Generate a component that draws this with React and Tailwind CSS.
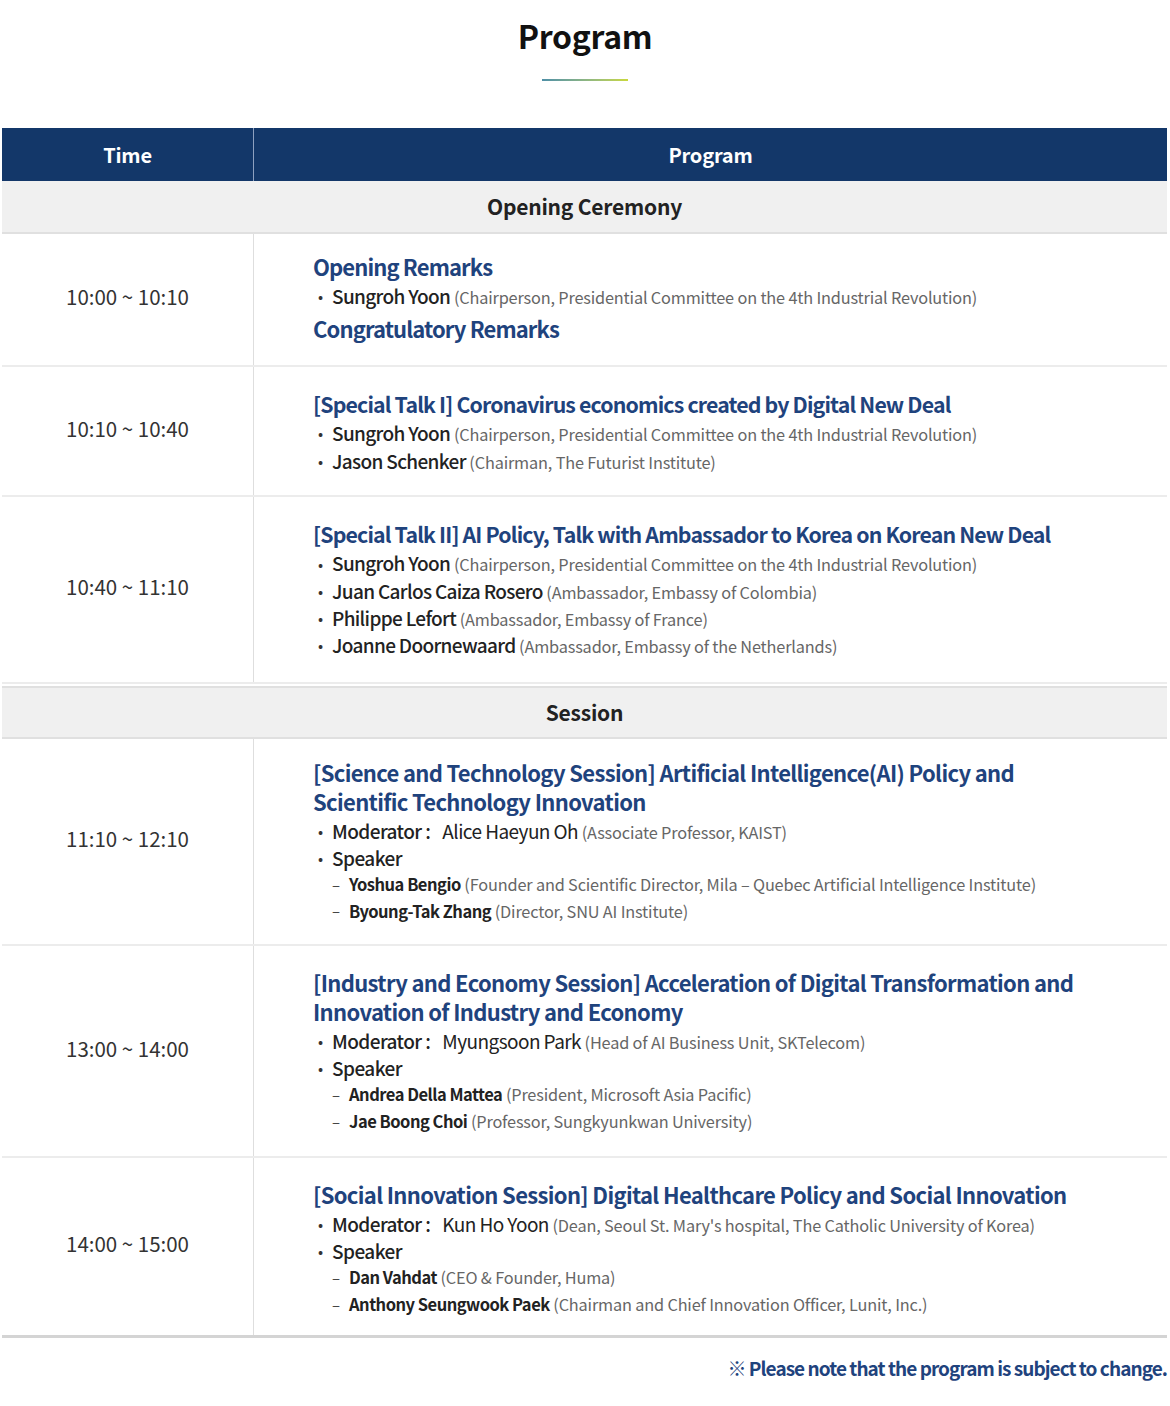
import React from 'react';

const rows = [
  {
    section: 'Opening Ceremony',
  },
  {
    time: '10:00 ~ 10:10',
    pad: 'pt-[18px] pb-[21px]',
    blocks: [
      {
        title: ['Opening Remarks'],
        items: [{ name: 'Sungroh Yoon', note: '(Chairperson, Presidential Committee on the 4th Industrial Revolution)' }],
      },
      { title: ['Congratulatory Remarks'], items: [] },
    ],
  },
  {
    time: '10:10 ~ 10:40',
    pad: 'pt-[22px] pb-[21.5px]',
    blocks: [
      {
        size: 'talk',
        title: ['[Special Talk I] Coronavirus economics created by Digital New Deal'],
        items: [
          { name: 'Sungroh Yoon', note: '(Chairperson, Presidential Committee on the 4th Industrial Revolution)' },
          { name: 'Jason Schenker', note: '(Chairman, The Futurist Institute)' },
        ],
      },
    ],
  },
  {
    time: '10:40 ~ 11:10',
    pad: 'pt-[22px] pb-[23.5px]',
    blocks: [
      {
        size: 'talk',
        title: ['[Special Talk II] AI Policy, Talk with Ambassador to Korea on Korean New Deal'],
        items: [
          { name: 'Sungroh Yoon', note: '(Chairperson, Presidential Committee on the 4th Industrial Revolution)' },
          { name: 'Juan Carlos Caiza Rosero', note: '(Ambassador, Embassy of Colombia)' },
          { name: 'Philippe Lefort', note: '(Ambassador, Embassy of France)' },
          { name: 'Joanne Doornewaard', note: '(Ambassador, Embassy of the Netherlands)' },
        ],
      },
    ],
  },
  {
    section: 'Session',
  },
  {
    time: '11:10 ~ 12:10',
    pad: 'pt-[18.5px] pb-[20px]',
    blocks: [
      {
        size: 'session',
        title: ['[Science and Technology Session] Artificial Intelligence(AI) Policy and', 'Scientific Technology Innovation'],
        moderator: { name: 'Alice Haeyun Oh', note: '(Associate Professor, KAIST)' },
        speakers: [
          { name: 'Yoshua Bengio', note: '(Founder and Scientific Director, Mila – Quebec Artificial Intelligence Institute)' },
          { name: 'Byoung-Tak Zhang', note: '(Director, SNU AI Institute)' },
        ],
      },
    ],
  },
  {
    time: '13:00 ~ 14:00',
    pad: 'pt-[21.5px] pb-[22px]',
    blocks: [
      {
        size: 'session',
        title: ['[Industry and Economy Session] Acceleration of Digital Transformation and', 'Innovation of Industry and Economy'],
        moderator: { name: 'Myungsoon Park', note: '(Head of AI Business Unit, SKTelecom)' },
        speakers: [
          { name: 'Andrea Della Mattea', note: '(President, Microsoft Asia Pacific)' },
          { name: 'Jae Boong Choi', note: '(Professor, Sungkyunkwan University)' },
        ],
      },
    ],
  },
  {
    time: '14:00 ~ 15:00',
    pad: 'pt-[21.5px] pb-[18px]',
    last: true,
    blocks: [
      {
        size: 'session',
        title: ['[Social Innovation Session] Digital Healthcare Policy and Social Innovation'],
        moderator: { name: 'Kun Ho Yoon', note: "(Dean, Seoul St. Mary's hospital, The Catholic University of Korea)" },
        speakers: [
          { name: 'Dan Vahdat', note: '(CEO & Founder, Huma)' },
          { name: 'Anthony Seungwook Paek', note: '(Chairman and Chief Innovation Officer, Lunit, Inc.)' },
        ],
      },
    ],
  },
];

const titleClass = {
  talk: 'text-[21.3px] tracking-[-0.04em]',
  session: 'text-[22px] tracking-[-0.03em]',
  plain: 'text-[22px] tracking-[-0.04em]',
};

const Bullet = ({ children }) => (
  <div className="h-[27.3px] flex items-center pl-[5px]">
    <span className="text-[15px] leading-none text-[#333] w-[14px] shrink-0">•</span>
    <div className="leading-none whitespace-nowrap">{children}</div>
  </div>
);

const Note = ({ children }) => (
  <span className="text-[16.3px] leading-none text-[#666] tracking-[-0.01em]">{children}</span>
);

const Block = ({ block, first }) => (
  <div className={first ? '' : 'mt-[5px]'}>
    <div className="mb-[1px]">
      {block.title.map((t) => (
        <div
          key={t}
          className={`leading-[29px] font-bold text-[#1f437d] whitespace-nowrap ${titleClass[block.size || 'plain']}`}
        >
          {t}
        </div>
      ))}
    </div>
    {block.items &&
      block.items.map((it) => (
        <Bullet key={it.name + it.note}>
          <span className="text-[19px] leading-none font-medium text-[#222] tracking-[-0.035em]">{it.name}</span>{' '}
          <Note>{it.note}</Note>
        </Bullet>
      ))}
    {block.moderator && (
      <>
        <Bullet>
          <span className="text-[19px] leading-none font-medium text-[#222] tracking-[-0.03em]">Moderator :</span>
          <span className="text-[19px] leading-none text-[#222] tracking-[-0.03em] ml-[12px]">{block.moderator.name}</span>{' '}
          <Note>{block.moderator.note}</Note>
        </Bullet>
        <Bullet>
          <span className="text-[19px] leading-none font-medium text-[#222] tracking-[-0.03em]">Speaker</span>
        </Bullet>
        {block.speakers.map((s) => (
          <div key={s.name} className="h-[26.5px] flex items-center pl-[19px]">
            <span className="text-[15px] leading-none text-[#444] w-[17px] shrink-0">–</span>
            <div className="leading-none whitespace-nowrap">
              <span className="text-[16.5px] leading-none font-bold text-[#222] tracking-[-0.03em]">{s.name}</span>{' '}
              <Note>{s.note}</Note>
            </div>
          </div>
        ))}
      </>
    )}
  </div>
);

export default function App() {
  return (
    <div className="w-[1170px] bg-white font-['Noto_Sans_CJK_KR','Noto_Sans',sans-serif] pb-[24px]">
      <div className="flex flex-col items-center pt-[13px]">
        <h1 className="text-[32px] leading-[44px] font-bold text-[#111] tracking-[-0.01em]">Program</h1>
        <div className="mt-[22px] w-[86px] h-[2px] bg-gradient-to-r from-[#4f8fa6] to-[#c9d83a]" />
      </div>

      <div className="ml-[2px] w-[1165px] mt-[47px]">
        <div className="flex h-[53px] bg-[#133769] text-white text-[20px] font-bold tracking-[-0.01em]">
          <div className="w-[252px] flex items-center justify-center border-r border-[#8da0c0]">Time</div>
          <div className="flex-1 flex items-center justify-center">Program</div>
        </div>

        {rows.map((row, i) =>
          row.section ? (
            <div
              key={row.section}
              className={`h-[53px] flex items-center justify-center bg-[#f0f0f0] border-b-2 border-[#e0e0e0] text-[21px] font-bold text-[#222] tracking-[-0.01em] ${i > 0 ? 'border-t-2 mt-[2px]' : ''}`}
            >
              {row.section}
            </div>
          ) : (
            <div
              key={row.time}
              className={`flex ${row.last ? 'border-b-[3px] border-[#d4d4d4]' : 'border-b-2 border-[#ececec]'}`}
            >
              <div className="w-[252px] shrink-0 flex items-center justify-center pb-[6px] border-r border-[#dedede] text-[20.5px] text-[#333]">
                {row.time}
              </div>
              <div className={`flex-1 pl-[59px] ${row.pad}`}>
                {row.blocks.map((b, j) => (
                  <Block key={j} block={b} first={j === 0} />
                ))}
              </div>
            </div>
          )
        )}
      </div>

      <div className="w-[1167px] mt-[17px] text-right text-[19px] font-bold text-[#1f437d] tracking-[-0.05em] leading-[26px]">
        ※ Please note that the program is subject to change.
      </div>
    </div>
  );
}
